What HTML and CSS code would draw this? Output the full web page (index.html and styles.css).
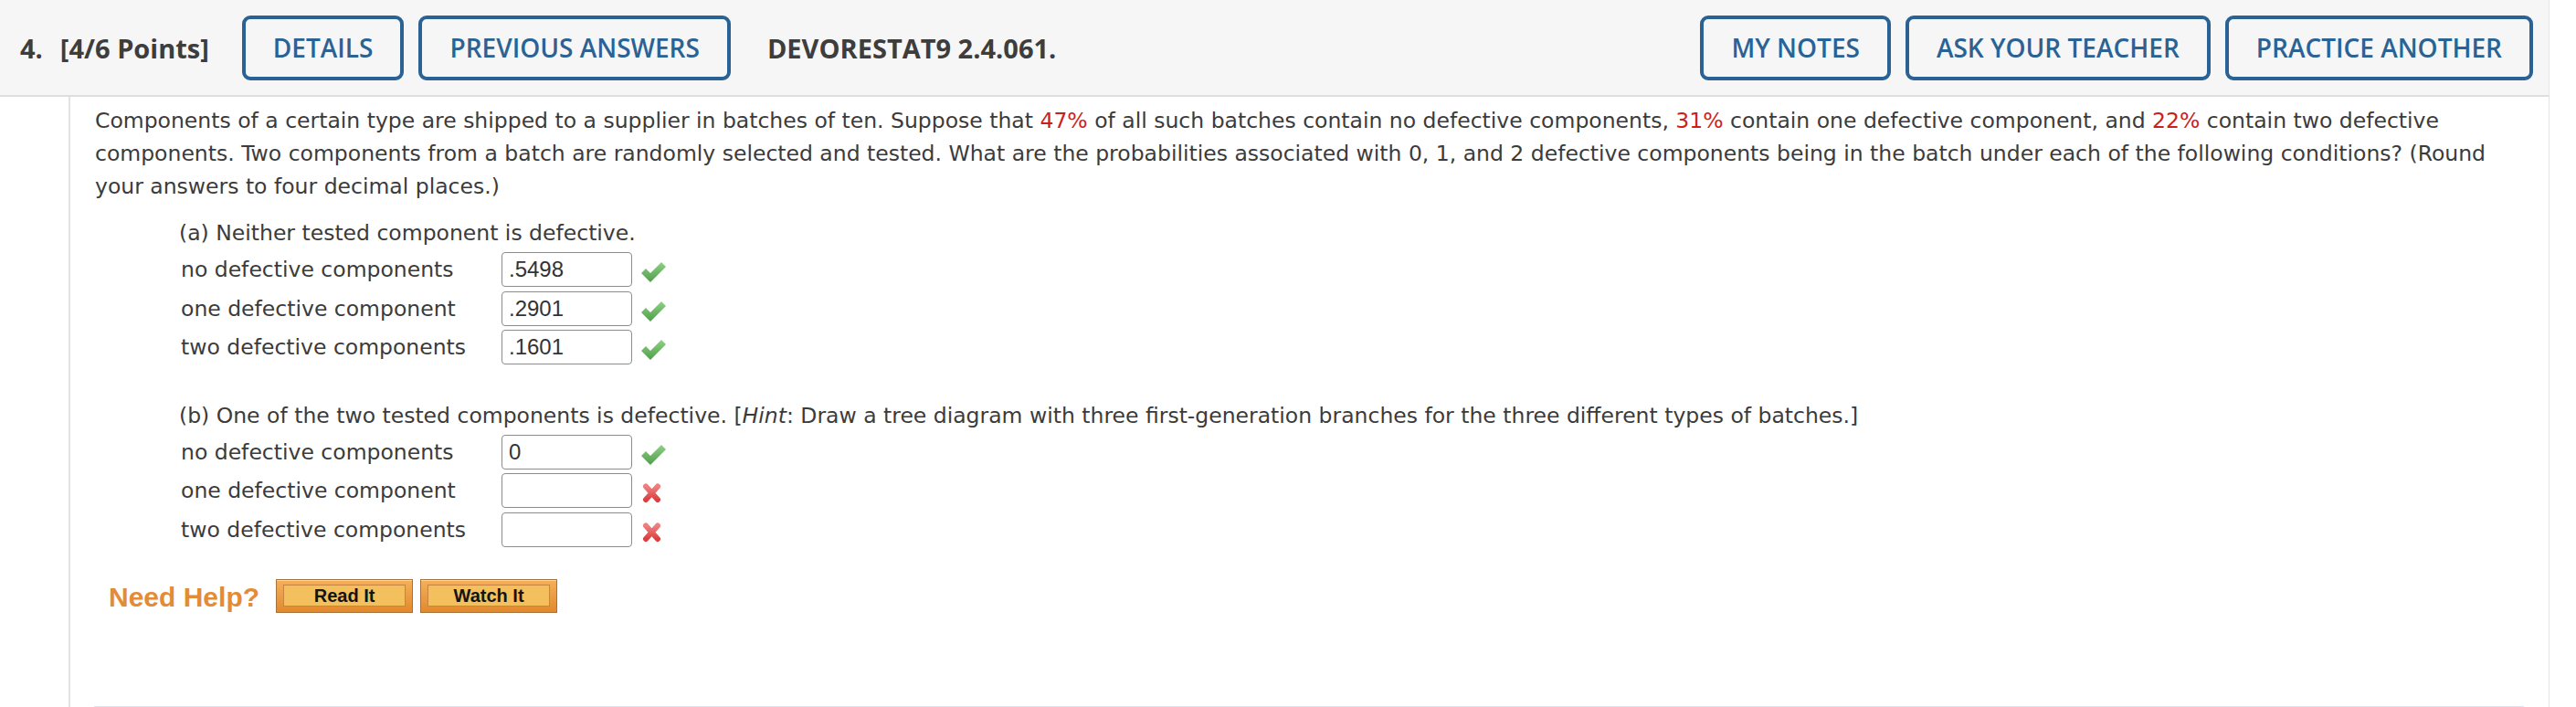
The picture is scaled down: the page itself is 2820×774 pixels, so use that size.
FILE: index.html
```html
<!DOCTYPE html>
<html lang="en">
<head>
<meta charset="utf-8">
<title>Question 4</title>
<link rel="stylesheet" href="styles.css">
</head>
<body>
<div class="question">
  <header class="qhead">
    <div class="qgroup">
      <span class="qnum">4.</span>
      <span class="qpts">[4/6 Points]</span>
      <button class="btn">DETAILS</button>
      <button class="btn">PREVIOUS ANSWERS</button>
      <span class="qid">DEVORESTAT9 2.4.061.</span>
    </div>
    <div class="qgroup">
      <button class="btn">MY NOTES</button>
      <button class="btn">ASK YOUR TEACHER</button>
      <button class="btn btn-last">PRACTICE ANOTHER</button>
    </div>
  </header>
  <section class="qbody">
    <p class="prompt">Components of a certain type are shipped to a supplier in batches of ten. Suppose that <span class="red">47%</span> of all such batches contain no defective components, <span class="red">31%</span> contain one defective component, and <span class="red">22%</span> contain two defective components. Two components from a batch are randomly selected and tested. What are the probabilities associated with 0, 1, and 2 defective components being in the batch under each of the following conditions? (Round your answers to four decimal places.)</p>

    <div class="part">
      <p class="part-label part-a">(a) Neither tested component is defective.</p>
      <div class="rows">
        <span class="label">no defective components</span>
        <input class="answer" type="text" value=".5498">
        <svg class="mark" viewBox="0 0 27 22" width="27" height="22">
          <defs>
            <linearGradient id="okg" x1="0" y1="0" x2="0" y2="1">
              <stop offset="0" stop-color="#8fd186"/>
              <stop offset="1" stop-color="#4f9e49"/>
            </linearGradient>
            <linearGradient id="badg" x1="0" y1="0" x2="0" y2="1">
              <stop offset="0" stop-color="#f08080"/>
              <stop offset="1" stop-color="#d9403f"/>
            </linearGradient>
          </defs>
          <path d="M0 12 L5 7 L10 12 L22 0 L27 5 L10 22 Z" fill="url(#okg)"/>
        </svg>

        <span class="label">one defective component</span>
        <input class="answer" type="text" value=".2901">
        <svg class="mark" viewBox="0 0 27 22" width="27" height="22"><path d="M0 12 L5 7 L10 12 L22 0 L27 5 L10 22 Z" fill="url(#okg)"/></svg>

        <span class="label">two defective components</span>
        <input class="answer" type="text" value=".1601">
        <svg class="mark" viewBox="0 0 27 22" width="27" height="22"><path d="M0 12 L5 7 L10 12 L22 0 L27 5 L10 22 Z" fill="url(#okg)"/></svg>
      </div>
    </div>

    <div class="part">
      <p class="part-label part-b">(b) One of the two tested components is defective. [<em>Hint</em>: Draw a tree diagram with three first-generation branches for the three different types of batches.]</p>
      <div class="rows">
        <span class="label">no defective components</span>
        <input class="answer" type="text" value="0">
        <svg class="mark" viewBox="0 0 27 22" width="27" height="22"><path d="M0 12 L5 7 L10 12 L22 0 L27 5 L10 22 Z" fill="url(#okg)"/></svg>

        <span class="label">one defective component</span>
        <input class="answer" type="text" value="">
        <svg class="mark" viewBox="0 0 27 22" width="27" height="22"><path d="M5 3.5 L18 18 M18 3.5 L5 18" stroke="url(#badg)" stroke-width="6" stroke-linecap="round" fill="none"/></svg>

        <span class="label">two defective components</span>
        <input class="answer" type="text" value="">
        <svg class="mark" viewBox="0 0 27 22" width="27" height="22"><path d="M5 3.5 L18 18 M18 3.5 L5 18" stroke="url(#badg)" stroke-width="6" stroke-linecap="round" fill="none"/></svg>
      </div>
    </div>

    <div class="help">
      <span class="help-title">Need Help?</span>
      <button class="help-btn"><span class="help-inner">Read It</span></button>
      <button class="help-btn"><span class="help-inner">Watch It</span></button>
    </div>

    <div class="sep"></div>
  </section>
</div>
</body>
</html>
```

FILE: styles.css
```css
* {
  box-sizing: border-box;
}

html,
body {
  margin: 0;
  padding: 0;
  background: #ffffff;
}

body {
  width: 2820px;
  height: 774px;
  overflow: hidden;
  font-family: "DejaVu Sans", Verdana, sans-serif;
  color: #3b3b3b;
}

.question {
  width: 2791px;
  height: 774px;
  border-right: 1px solid #e4e4e4;
  display: flex;
  flex-direction: column;
}

/* ---------- header ---------- */
.qhead {
  flex: none;
  height: 106px;
  background: #f6f6f6;
  border-bottom: 2px solid #dedede;
  display: flex;
  align-items: center;
  justify-content: space-between;
  padding: 0 17px 0 22px;
  font-family: "Open Sans", "Liberation Sans", sans-serif;
}

.qgroup {
  display: flex;
  align-items: center;
}

.qnum,
.qpts,
.qid {
  font-size: 29px;
  font-weight: 700;
  color: #3d3d3d;
  white-space: nowrap;
}

.qnum {
  margin-right: 19px;
}

.qpts {
  margin-right: 36px;
}

.qid {
  margin-left: 24px;
}

.btn {
  height: 71px;
  padding: 0 30px;
  margin-right: 16px;
  border: 4px solid #2b6294;
  border-radius: 9px;
  background: transparent;
  color: #2b6294;
  font-family: "Open Sans", "Liberation Sans", sans-serif;
  font-size: 28px;
  font-weight: 600;
  white-space: nowrap;
  cursor: pointer;
}

.btn-last {
  margin-right: 0;
}

/* ---------- body ---------- */
.qbody {
  flex: 1;
  margin-left: 75px;
  border-left: 2px solid #e2e2e2;
  padding: 8px 27px 0 27px;
  display: flex;
  flex-direction: column;
}

.prompt {
  margin: 0;
  font-size: 23.5px;
  line-height: 36px;
}

.red {
  color: #cc1f1b;
}

.part {
  margin-left: 92px;
}

.part-label {
  margin: 0 0 1px;
  font-size: 23.5px;
  line-height: 36px;
}

.part-a {
  margin-top: 15px;
}

.part-b {
  margin-top: 35px;
}

.part-label em {
  font-style: italic;
}

.rows {
  margin-left: 2px;
  display: grid;
  grid-template-columns: 341px 143px 27px;
  grid-auto-rows: 42.5px;
  column-gap: 10px;
  align-items: center;
}

.label {
  font-size: 23.5px;
  line-height: 36px;
  white-space: nowrap;
}

.answer {
  width: 143px;
  height: 38px;
  margin: 0;
  padding: 0 7px;
  border: 1px solid #8c8c8c;
  border-radius: 4px;
  background: #ffffff;
  color: #333333;
  font-family: "Liberation Sans", Arial, sans-serif;
  font-size: 24px;
  outline: none;
}

.mark {
  display: block;
  margin-top: 6px;
}

/* ---------- help ---------- */
.help {
  margin-top: 33px;
  margin-left: 15px;
  display: flex;
  align-items: center;
}

.help-title {
  font-family: "Liberation Sans", Arial, sans-serif;
  font-size: 30px;
  font-weight: 700;
  color: #e38b35;
  margin-right: 18px;
  margin-top: 3px;
}

.help-btn {
  width: 150px;
  height: 37px;
  margin: 0 8px 0 0;
  padding: 5px 7px 6px;
  border: 1px solid #a6713a;
  background: linear-gradient(#f4b05a, #e3892e);
  box-shadow: inset 0 1px 0 #f9d9a8;
  cursor: pointer;
}

.help-inner {
  display: flex;
  align-items: center;
  justify-content: center;
  height: 100%;
  border: 1px solid #c5843f;
  background: #f4bf5d;
  font-family: "Liberation Sans", Arial, sans-serif;
  font-size: 20px;
  font-weight: 700;
  color: #141414;
}

.sep {
  margin-top: auto;
  margin-left: -1px;
  height: 1px;
  border-top: 1px solid #dde4ec;
}
```
